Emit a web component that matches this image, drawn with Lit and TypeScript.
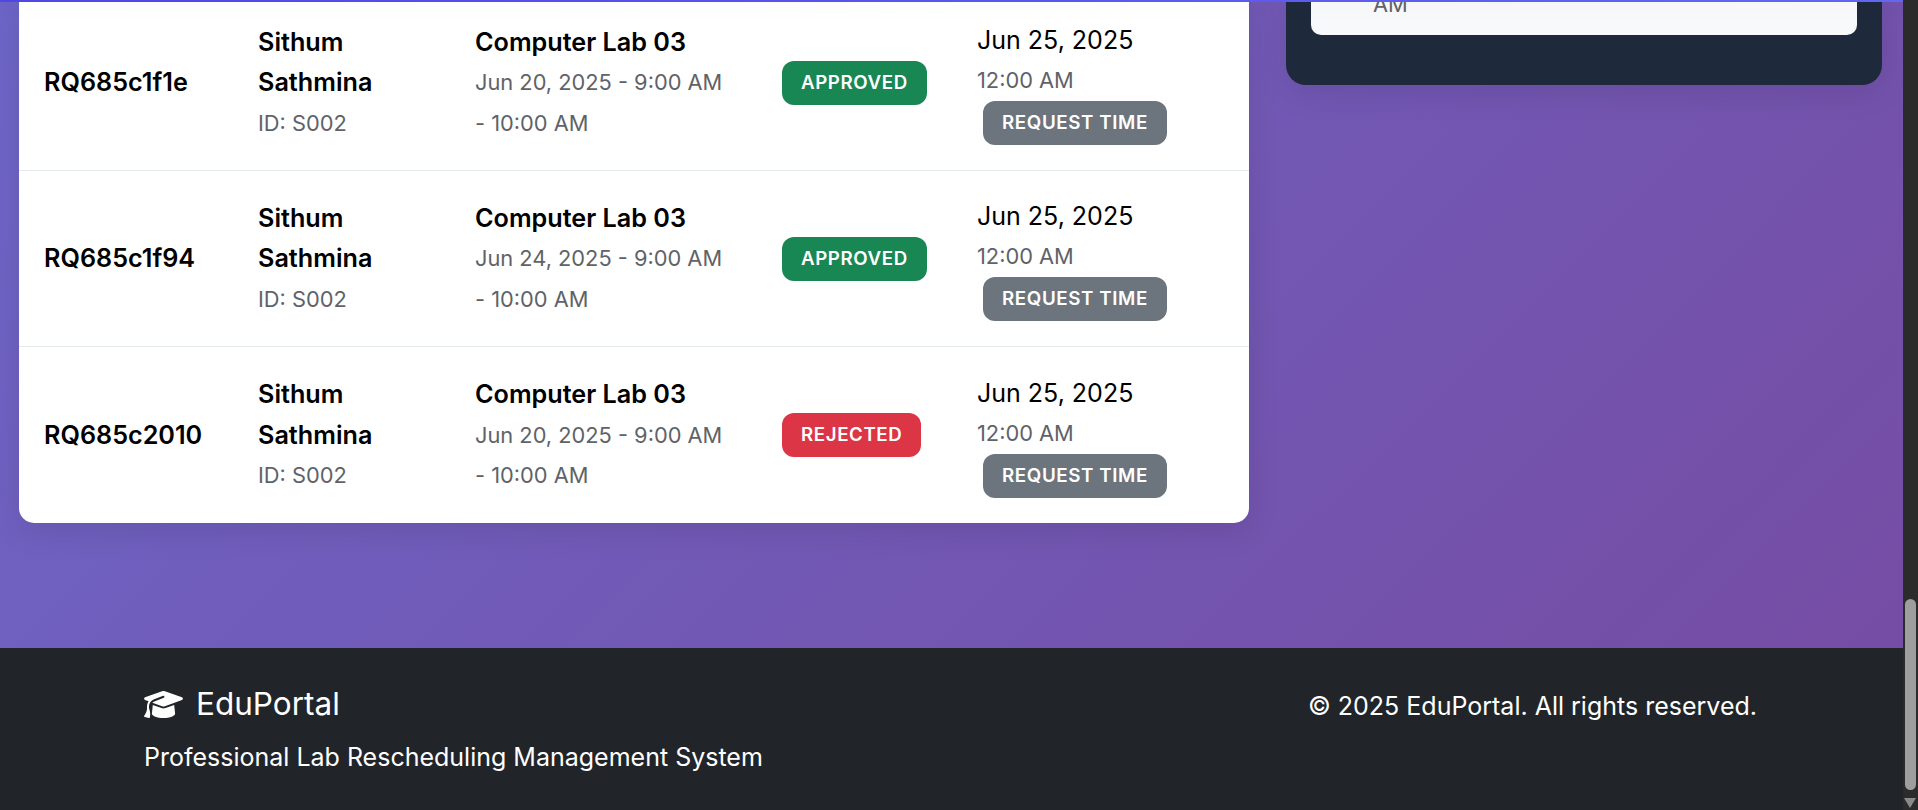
import { LitElement, html, css } from "lit";
import { customElement } from "lit/decorators.js";

const rows = [
  { id: "RQ685c1f1e", date: "Jun 20, 2025", status: "APPROVED", cls: "ok" },
  { id: "RQ685c1f94", date: "Jun 24, 2025", status: "APPROVED", cls: "ok" },
  { id: "RQ685c2010", date: "Jun 20, 2025", status: "REJECTED", cls: "bad" },
];

const cap = "M320 32c-8.1 0-16.1 1.4-23.7 4.1L15.8 137.4C6.3 140.9 0 149.9 0 160s6.3 19.1 15.8 22.6l57.9 20.9C57.3 229.3 48 259.8 48 291.9v28.1c0 28.4-10.8 57.7-22.3 80.8c-6.5 13-13.9 25.8-22.5 37.6C0 442.7-.9 448.3 .9 453.4s6 8.9 11.2 10.2l64 16c4.2 1.1 8.7 .3 12.4-2s6.3-6.1 7.1-10.4c8.6-42.8 4.3-81.2-2.1-108.7C90.3 344.3 86 329.8 80 316.5V291.9c0-30.2 10.2-58.7 27.9-81.5c12.9-15.5 29.6-28 49.2-35.7l157-61.7c8.2-3.2 17.5 .8 20.7 9s-.8 17.5-9 20.7l-157 61.7c-12.4 4.9-23.3 12.4-32.2 21.6l159.6 57.6c7.6 2.7 15.6 4.1 23.7 4.1s16.1-1.4 23.7-4.1L624.2 182.6c9.5-3.4 15.8-12.5 15.8-22.6s-6.3-19.1-15.8-22.6L343.7 36.1C336.1 33.4 328.1 32 320 32zM128 408c0 35.3 86 72 192 72s192-36.7 192-72L496.7 262.6 354.5 314c-11.1 4-22.8 6-34.5 6s-23.5-2-34.5-6L143.3 262.6 128 408z";

@customElement("app-root")
export class AppRoot extends LitElement {
  static styles = css`
    :host { display: block; font-family: Inter, "Liberation Sans", sans-serif; }
    .shell { display: flex; height: 810px; overflow: hidden; background: #2b2b2b; }
    .page {
      flex: 1; min-width: 0; position: relative; overflow: hidden;
      display: flex; flex-direction: column;
      background: linear-gradient(135deg, #667eea 0%, #764ba2 100%) bottom / 100% 3300px no-repeat;
    }
    .navbar {
      position: absolute; top: 0; left: 0; right: 0; height: 2px; z-index: 5;
      background: linear-gradient(90deg, #4f46e5, #6366f1);
      box-shadow: 0 4px 20px rgba(0, 0, 0, .1);
    }
    main { flex: 1; min-height: 0; display: flex; align-items: flex-start; gap: 37px; padding: 0 21px 0 19px; margin-top: -5px; }
    .table {
      width: 1230px; flex: none; background: #fff;
      border-radius: 0 0 15px 15px;
      box-shadow: 0 8px 32px rgba(0, 0, 0, .1);
    }
    .row {
      display: grid; grid-template-columns: 214px 217px 307px 195px 297px;
      height: 176px; align-items: center; box-sizing: border-box;
      border-bottom: 1px solid #e5e9f2;
    }
    .row:last-child { border-bottom: none; }
    .cell { padding: 0 25px; font-size: 25.2px; line-height: 40.5px; color: #000; min-width: 0; }
    .strong { font-weight: 600; }
    .muted { color: #5f6368; font-size: 21.8px; }
    .badge {
      display: inline-block; color: #fff; font-weight: 600; font-size: 18.7px; line-height: 20px;
      letter-spacing: .6px; padding: 12px 19px; border-radius: 12px; vertical-align: top;
    }
    .ok { background: #198754; }
    .bad { background: #dc3545; }
    .date { font-size: 25px; line-height: 40px; }
    .time { line-height: 40px; }
    .btn {
      display: block; width: fit-content; margin: 1px 0 0 6px; padding: 12px 19px;
      background: #6c757d; color: #fff; border-radius: 12px; font-weight: 600; font-size: 18.75px;
      line-height: 20px; letter-spacing: .6px;
    }
    .side {
      flex: 1; min-width: 0; background: #1e293b; border-radius: 0 0 20px 20px;
      padding: 0 25px 50px; box-shadow: 0 8px 32px rgba(0, 0, 0, .1);
    }
    .inner {
      background: #f8f9fa; height: 40px; border-radius: 0 0 10px 10px;
      padding-left: 62px; color: #5f6368; font-size: 21.8px; line-height: 18px;
      box-sizing: border-box;
    }
    footer {
      height: 162px; flex: none; background: #212529; color: #fff; box-sizing: border-box;
      padding: 35px 146px 0 144px; display: flex; justify-content: space-between; align-items: flex-start;
    }
    .brand { display: flex; align-items: center; gap: 13px; font-size: 31.5px; line-height: 42px; }
    .brand svg { width: 39px; height: 31px; fill: #fff; display: block; }
    .tag { font-size: 25px; line-height: 34px; margin-top: 15px; }
    .copy { font-size: 25px; line-height: 34px; margin-top: 6px; }
    .bar { width: 15px; flex: none; position: relative; background: #2b2b2b; }
    .thumb { position: absolute; left: 2px; width: 11px; top: 599px; height: 191px; border-radius: 6px; background: #9e9e9e; }
    .arrow { position: absolute; left: 1px; top: 798px; width: 0; height: 0; border-left: 6.5px solid transparent; border-right: 6.5px solid transparent; border-top: 10px solid #8a8a8a; }
  `;

  render() {
    return html`
      <div class="shell">
        <div class="page">
          <div class="navbar"></div>
          <main>
            <section class="table">
              ${rows.map((r) => html`
                <div class="row">
                  <div class="cell strong">${r.id}</div>
                  <div class="cell"><div class="strong">Sithum Sathmina</div><div class="muted">ID: S002</div></div>
                  <div class="cell"><div class="strong">Computer Lab 03</div><div class="muted">${r.date} - 9:00 AM - 10:00 AM</div></div>
                  <div class="cell"><span class="badge ${r.cls}">${r.status}</span></div>
                  <div class="cell"><div class="date">Jun 25, 2025</div><div class="muted time">12:00 AM</div><div class="btn">REQUEST TIME</div></div>
                </div>`)}
            </section>
            <aside class="side"><div class="inner">AM</div></aside>
          </main>
          <footer>
            <div>
              <div class="brand"><svg viewBox="0 0 640 512"><path d="${cap}"></path></svg><span>EduPortal</span></div>
              <div class="tag">Professional Lab Rescheduling Management System</div>
            </div>
            <div class="copy">© 2025 EduPortal. All rights reserved.</div>
          </footer>
        </div>
        <div class="bar"><div class="thumb"></div><div class="arrow"></div></div>
      </div>
    `;
  }
}
